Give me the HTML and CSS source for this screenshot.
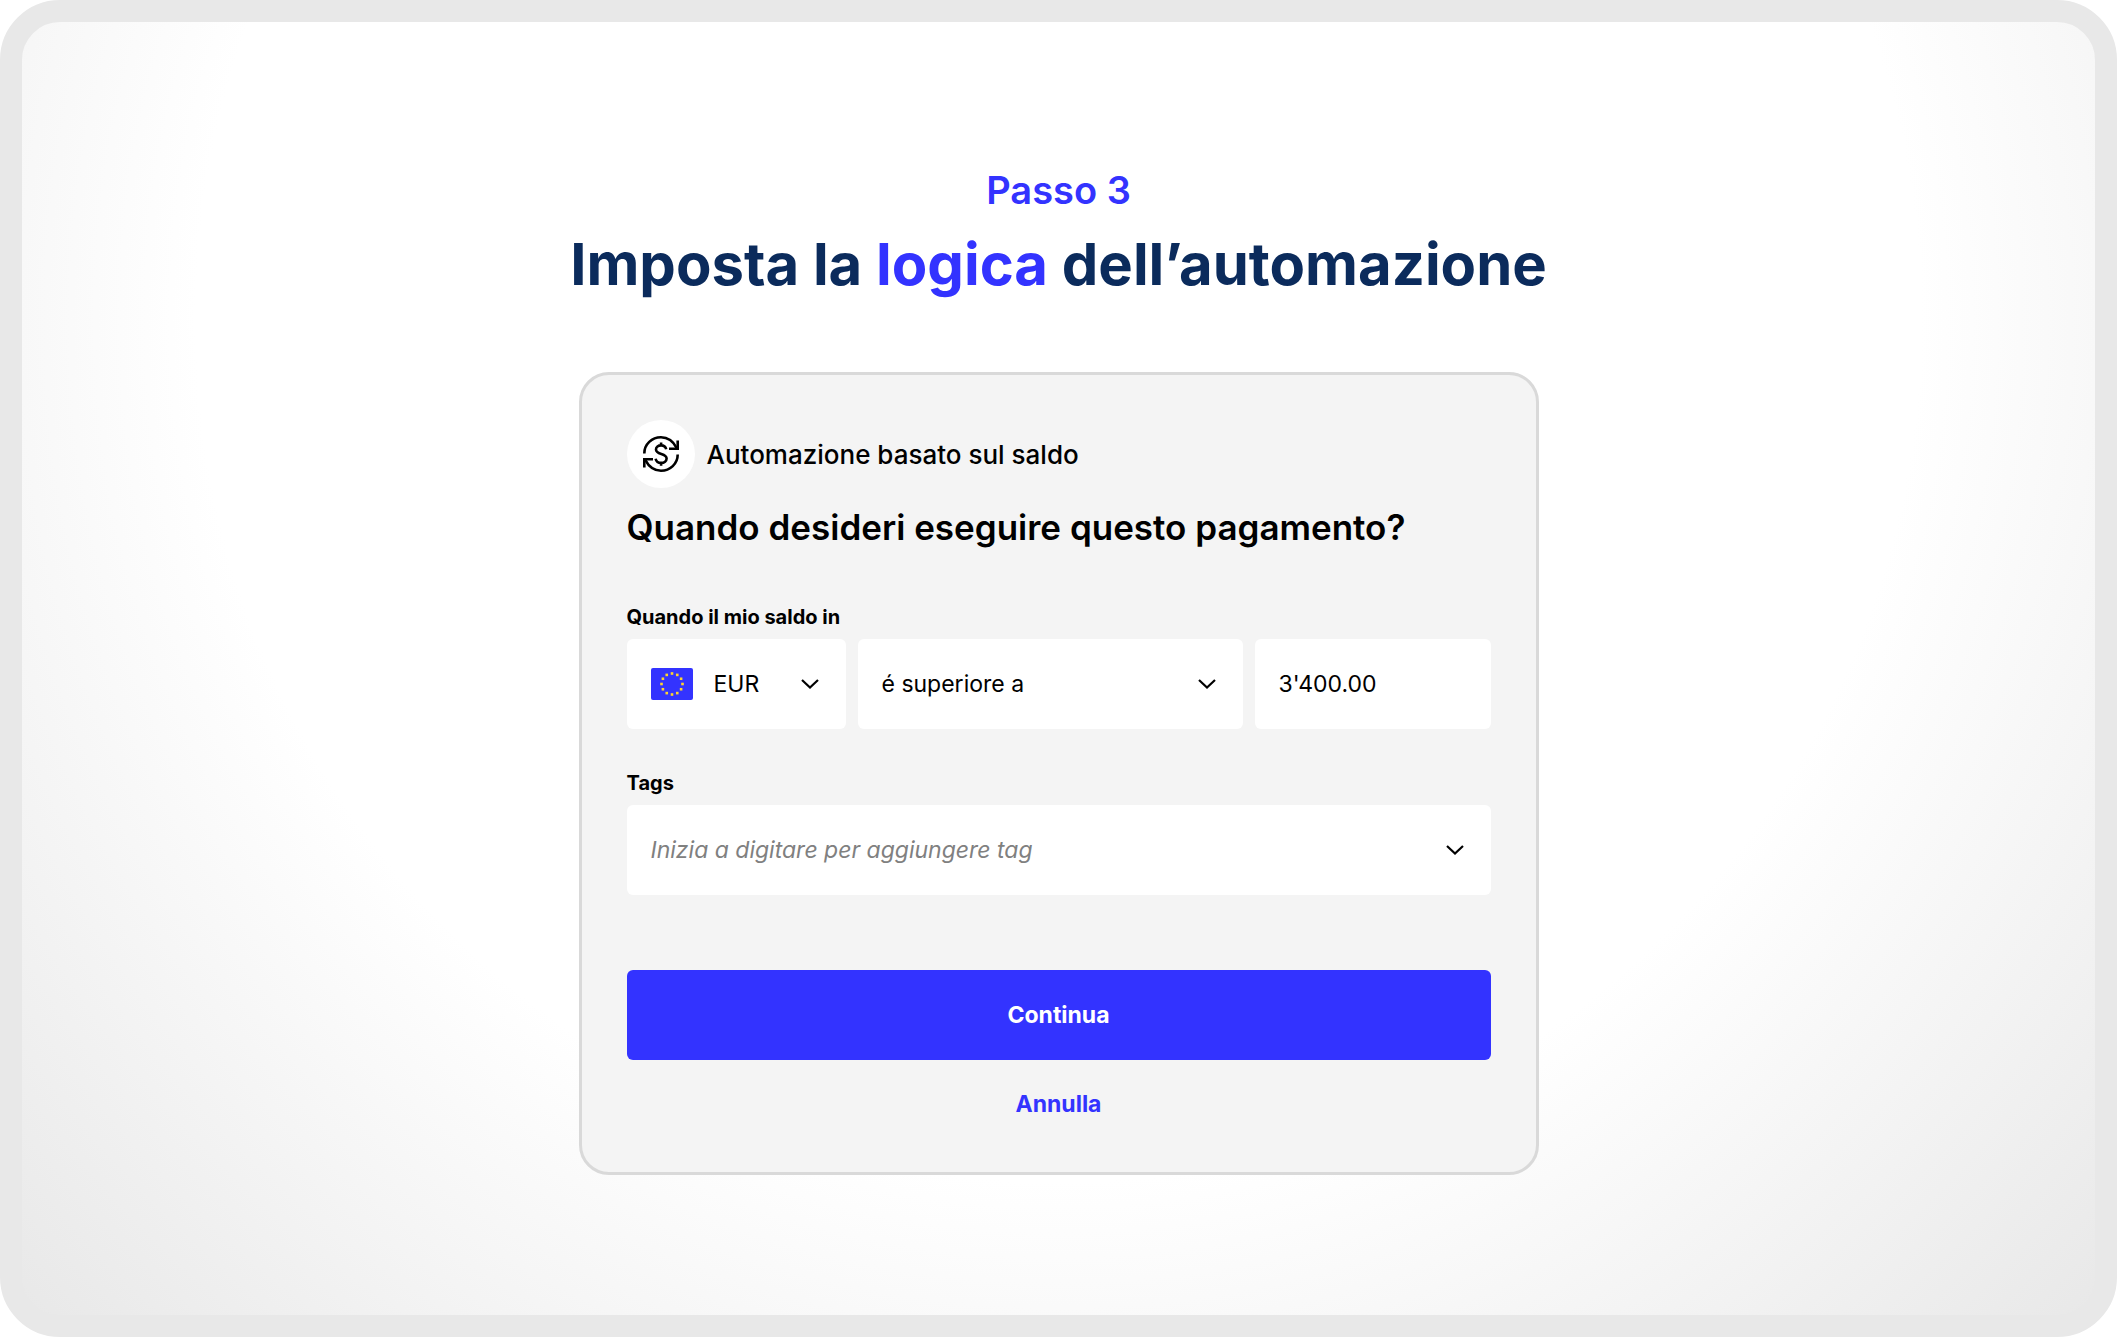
FILE: index.html
```
<!DOCTYPE html>
<html lang="it">
<head>
  <meta charset="UTF-8">
  <meta name="viewport" content="width=device-width, initial-scale=1.0">
  <title>Passo 3 - Imposta la logica dell’automazione</title>
  <link rel="stylesheet" href="styles.css">
</head>
<body>
  <main class="frame">
    <header class="heading">
      <p class="step">Passo 3</p>
      <h1 class="title">Imposta la <span class="highlight">logica</span> dell’automazione</h1>
    </header>

    <form class="card">
      <div class="card-type">
        <span class="type-icon">
          <svg viewBox="0 0 36 36" width="36" height="36" fill="none" stroke="#000" stroke-width="2.6" aria-hidden="true">
            <path d="M1.3 17.5C1.3 8.2 8.9 1.3 18 1.3c6.9 0 12.2 4 15.8 10.800"/>
            <path d="M34.700 4.500v8.200H26"/>
            <path d="M34.700 18.500C34.700 27.800 27.100 34.700 18 34.700c-6.900 0-12.200-4-15.800-10.800"/>
            <path d="M1.300 31.500v-8.200H10"/>
            <path d="M23.200 13.200C22.600 10.800 20.600 9.400 18.100 9.400c-2.900 0-5.100 1.600-5.100 4.100 0 5.800 10.600 3.200 10.600 9 0 2.600-2.400 4.400-5.400 4.400-2.800 0-5-1.500-5.600-4.200M18.100 6.500v3M18.100 26.800v3"/>
          </svg>
        </span>
        <span class="type-name">Automazione basato sul saldo</span>
      </div>
      <h2 class="question">Quando desideri eseguire questo pagamento?</h2>

      <!-- Condition -->
      <div class="group">
        <label class="label" for="currency">Quando il mio saldo in</label>
        <div class="fields">
          <div class="field">
            <svg class="flag" viewBox="0 0 42 32" width="42" height="32" aria-hidden="true">
              <rect width="42" height="32" rx="2" fill="#3333ff"/>
              <g fill="#ffd52e">
                <rect x="19.700" y="4.200" width="2.600" height="2.600"/>
                <rect x="24.950" y="5.600" width="2.600" height="2.600"/>
                <rect x="28.800" y="9.450" width="2.600" height="2.600"/>
                <rect x="30.200" y="14.700" width="2.600" height="2.600"/>
                <rect x="28.800" y="19.950" width="2.600" height="2.600"/>
                <rect x="24.950" y="23.800" width="2.600" height="2.600"/>
                <rect x="19.700" y="25.200" width="2.600" height="2.600"/>
                <rect x="14.450" y="23.800" width="2.600" height="2.600"/>
                <rect x="10.600" y="19.950" width="2.600" height="2.600"/>
                <rect x="9.200" y="14.700" width="2.600" height="2.600"/>
                <rect x="10.600" y="9.450" width="2.600" height="2.600"/>
                <rect x="14.450" y="5.600" width="2.600" height="2.600"/>
              </g>
            </svg>
            <select class="control with-flag" id="currency">
              <option>EUR</option>
              <option>CHF</option>
              <option>USD</option>
            </select>
            <svg class="chevron" viewBox="0 0 18 10" width="18" height="10" aria-hidden="true"><path d="M1 1l8 7.500L17 1"/></svg>
          </div>
          <div class="field">
            <select class="control" id="condition" aria-label="Condizione">
              <option>é superiore a</option>
              <option>é inferiore a</option>
            </select>
            <svg class="chevron" viewBox="0 0 18 10" width="18" height="10" aria-hidden="true"><path d="M1 1l8 7.500L17 1"/></svg>
          </div>
          <div class="field">
            <input class="control" id="amount" type="text" value="3'400.00" aria-label="Importo">
          </div>
        </div>
      </div>

      <!-- Tags -->
      <div class="group">
        <label class="label" for="tags">Tags</label>
        <div class="field">
          <input class="control" id="tags" type="text" placeholder="Inizia a digitare per aggiungere tag">
          <svg class="chevron" viewBox="0 0 18 10" width="18" height="10" aria-hidden="true"><path d="M1 1l8 7.500L17 1"/></svg>
        </div>
      </div>

      <div class="actions">
        <button class="btn btn-primary" type="submit">Continua</button>
        <button class="btn btn-link" type="button">Annulla</button>
      </div>
    </form>
  </main>
</body>
</html>
```
FILE: styles.css
```
* {
  box-sizing: border-box;
}
body {
  margin: 0;
  background: #fff;
  color: #000;
  font-family: Inter, "Liberation Sans", sans-serif;
}
.frame {
  display: flex;
  flex-direction: column;
  align-items: center;
  gap: 64px;
  min-height: 100vh;
  padding: 138px 24px;
  border: 22px solid #e8e8e8;
  border-radius: 60px;
  background: radial-gradient(circle at 50% 23%, #fff 60%, #e8e8e8 100%);
}
.heading {
  text-align: center;
}
.step {
  margin: 0;
  font-size: 38px;
  line-height: 60px;
  font-weight: 600;
  color: #3333ff;
}
.title {
  margin: 0;
  font-size: 58px;
  line-height: 88px;
  font-weight: 700;
  color: #0b2b5c;
}
.highlight {
  color: #3333ff;
}
.card {
  width: 100%;
  max-width: 960px;
  padding: 45px 45px 24px;
  border: 3px solid #d9d9d9;
  border-radius: 30px;
  background: #f4f4f4;
}
.card-type {
  display: flex;
  align-items: center;
  gap: 12px;
  font-size: 26px;
  font-weight: 500;
}
.type-icon {
  display: flex;
  align-items: center;
  justify-content: center;
  width: 68px;
  height: 68px;
  border-radius: 50%;
  background: #fff;
}
.question {
  margin: 15px 0 52px;
  font-size: 35px;
  line-height: 48px;
  font-weight: 600;
}
.group {
  margin-bottom: 40px;
}
.label {
  display: block;
  margin-bottom: 8px;
  font-size: 20px;
  line-height: 28px;
  font-weight: 700;
}
.fields {
  display: grid;
  grid-template-columns: 219fr 385fr 236fr;
  gap: 12px;
}
.field {
  position: relative;
}
.control {
  display: block;
  width: 100%;
  height: 90px;
  padding: 0 24px;
  border: none;
  border-radius: 6px;
  background: #fff;
  color: #000;
  font-family: inherit;
  font-size: 23px;
  appearance: none;
}
.control::placeholder {
  color: #808080;
  font-style: italic;
  opacity: 1;
}
.with-flag {
  padding-left: 87px;
}
.flag {
  position: absolute;
  left: 24px;
  top: 29px;
}
.chevron {
  position: absolute;
  right: 27px;
  top: 40px;
  fill: none;
  stroke: #000;
  stroke-width: 2.2;
  pointer-events: none;
}
.actions {
  display: flex;
  flex-direction: column;
  margin-top: 75px;
}
.btn {
  height: 90px;
  border: none;
  border-radius: 6px;
  font-family: inherit;
  font-size: 23px;
  font-weight: 700;
  cursor: pointer;
}
.btn-primary {
  background: #3333ff;
  color: #fff;
}
.btn-link {
  height: 88px;
  background: none;
  color: #3333ff;
}
@media (max-width: 700px) {
  .fields {
    grid-template-columns: 1fr;
  }
  .title {
    font-size: 40px;
    line-height: 56px;
  }
  .card {
    padding: 24px;
  }
}
```
